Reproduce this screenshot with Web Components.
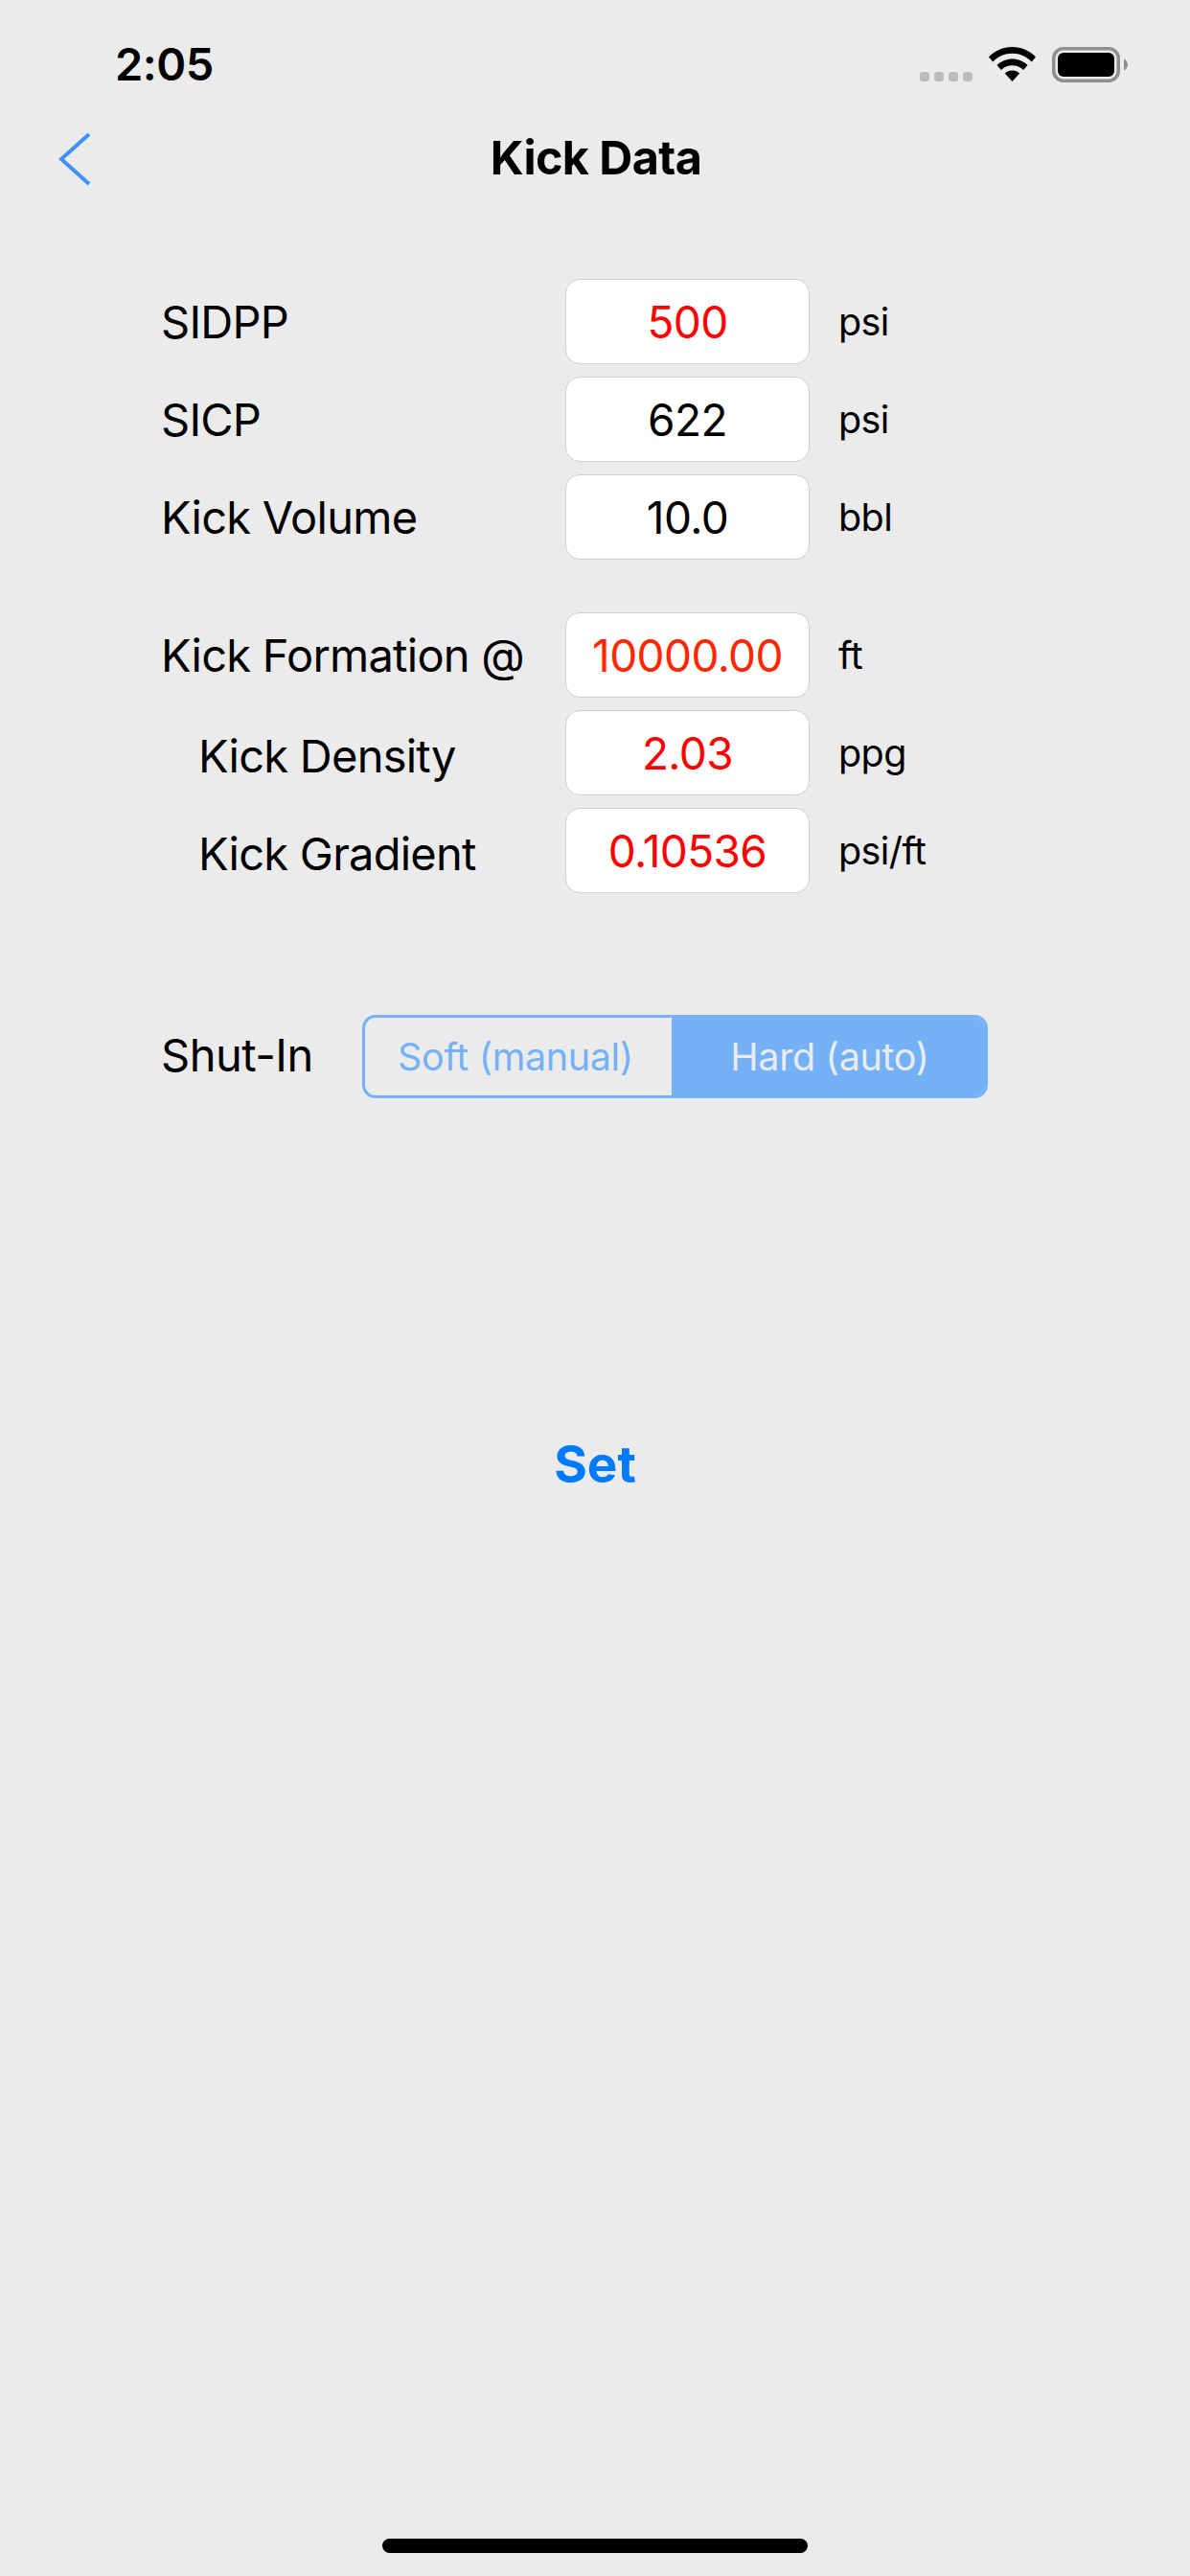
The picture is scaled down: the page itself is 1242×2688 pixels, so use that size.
<!DOCTYPE html>
<html lang="en"><head><meta charset="utf-8"><title>Kick Data</title>
<style>
html,body{margin:0;padding:0;background:#ebebeb}
body{font-family:Inter,"Liberation Sans",sans-serif;color:#000}
</style></head>
<body>
<kick-screen>
  <status-bar slot="status" time="2:05"></status-bar>
  <nav-bar slot="nav" title="Kick Data"></nav-bar>
  <form-group>
    <data-row label="SIDPP" value="500" unit="psi" color="#ff0000"></data-row>
    <data-row label="SICP" value="622" unit="psi"></data-row>
    <data-row label="Kick Volume" value="10.0" unit="bbl"></data-row>
  </form-group>
  <form-group second>
    <data-row label="Kick Formation @" value="10000.00" unit="ft" color="#ff2600"></data-row>
    <data-row label="Kick Density" value="2.03" unit="ppg" color="#ff0000" indent></data-row>
    <data-row label="Kick Gradient" value="0.10536" unit="psi/ft" color="#ff0000" indent></data-row>
  </form-group>
  <shut-in></shut-in>
  <set-button>Set</set-button>
  <home-indicator slot="home"></home-indicator>
</kick-screen>
<script>
function def(name,html,init){
  customElements.define(name,class extends HTMLElement{
    constructor(){super();this.attachShadow({mode:'open'}).innerHTML=html;}
    connectedCallback(){if(init)init(this,this.shadowRoot);}
  });
}
def('kick-screen',`<style>
:host{display:flex;flex-direction:column;width:1242px;height:2688px;background:#ebebeb;overflow:hidden}
.main{display:flex;flex-direction:column;flex:1}
</style><slot name="status"></slot><slot name="nav"></slot><div class="main"><slot></slot></div><slot name="home"></slot>`);

def('status-bar',`<style>
:host{display:flex;align-items:flex-start;justify-content:space-between;height:116px;box-sizing:border-box;padding:44px 65px 0 120px}
.t{font:600 47px/46px Inter,"Liberation Sans",sans-serif;letter-spacing:-.5px}
.r{display:flex;align-items:flex-start;padding-top:5px}
.dots{display:flex;gap:5px;margin-top:26px;margin-right:17px}
.dots i{width:10px;height:10px;border-radius:3.5px;background:#bcbcbc}
svg{display:block}
.wifi{margin-right:17px}
</style><div class="t"></div><div class="r"><div class="dots"><i></i><i></i><i></i><i></i></div>
<svg class="wifi" width="49" height="36" viewBox="0 0 49 36"><path fill="#000" d="M24.500 0C15 0 6.500 3.600 0 10.500l4.300 5C9.600 9.800 16.800 6.700 24.500 6.700s14.900 3.100 20.200 8.800l4.300-5C42.500 3.600 34 0 24.500 0z"/><path fill="#000" d="M24.500 12.500c-6.200 0-11.800 2.400-16 6.500l4.400 5c3-2.900 7.100-4.700 11.600-4.700s8.600 1.800 11.600 4.700l4.400-5c-4.200-4.100-9.800-6.500-16-6.500z"/><path fill="#000" d="M24.500 24.500c-3 0-5.700 1.100-7.700 3L24.500 36l7.700-8.500c-2-1.900-4.700-3-7.700-3z"/></svg>
<svg width="79" height="37" viewBox="0 0 79 37"><rect x="1.750" y="1.750" width="67.500" height="33.500" rx="10" fill="none" stroke="#8e8e8e" stroke-width="3.500"/><rect x="6" y="6" width="59" height="25" rx="6" fill="#000"/><path d="M75 12.500c2 .8 4 3 4 6s-2 5.200-4 6z" fill="#8e8e8e"/></svg>
</div>`,(h,s)=>{s.querySelector('.t').textContent=h.getAttribute('time')});

def('nav-bar',`<style>
:host{display:grid;grid-template-columns:1fr auto 1fr;align-items:center;height:100px;box-sizing:border-box}
.b{padding-left:61px;display:flex}
.t{font:700 48.500px/60px Inter,"Liberation Sans",sans-serif;letter-spacing:-.6px;padding:0 0 2px 2px}
svg{display:block}
</style><div class="b"><svg width="34" height="56" viewBox="0 0 34 56"><path d="M32 2 3 28l29 26" fill="none" stroke="#3d92f6" stroke-width="4"/></svg></div><div class="t"></div><div></div>`,(h,s)=>{s.querySelector('.t').textContent=h.getAttribute('title')});

def('form-group',`<style>
:host{display:flex;flex-direction:column;gap:13px;padding:75px 0 0 168px}
:host([second]){padding-top:55px}
</style><slot></slot>`);

def('data-row',`<style>
:host{display:grid;grid-template-columns:422px 255px auto;align-items:center;height:89px}
.l{font:400 47px/56px Inter,"Liberation Sans",sans-serif;letter-spacing:-.75px;white-space:nowrap}
:host([indent]) .l{padding-left:39px;padding-top:6px}
.v{box-sizing:border-box;height:89px;background:#fff;border:1.500px solid #cfcfcf;border-radius:15px;display:flex;align-items:center;justify-content:center;font:400 46px/56px Inter,"Liberation Sans",sans-serif;letter-spacing:-.6px}
.u{font:400 39.500px/50px Inter,"Liberation Sans",sans-serif;padding-left:30px;letter-spacing:-.6px}
</style><div class="l"></div><div class="v"></div><div class="u"></div>`,(h,s)=>{
  s.querySelector('.l').textContent=h.getAttribute('label');
  const v=s.querySelector('.v');v.textContent=h.getAttribute('value');
  if(h.getAttribute('color'))v.style.color=h.getAttribute('color');
  s.querySelector('.u').textContent=h.getAttribute('unit');
});

def('shut-in',`<style>
:host{display:flex;align-items:center;padding:127px 0 0 168px}
.l{width:210px;font:400 47px/56px Inter,"Liberation Sans",sans-serif;letter-spacing:-.5px;padding-bottom:3px}
.s{display:flex;width:653px;height:87px;box-sizing:border-box;border:3px solid #74b1f7;border-radius:14px;overflow:hidden;font:400 39.500px/50px Inter,"Liberation Sans",sans-serif;letter-spacing:-.35px}
.s div{display:flex;align-items:center;justify-content:center}
.a{width:320px;box-sizing:border-box;padding-right:6px;color:#74b1f7}
.b{flex:1;background:#74b1f7;color:#ebebeb;padding-left:3px}
</style><div class="l">Shut-In</div><div class="s"><div class="a">Soft (manual)</div><div class="b">Hard (auto)</div></div>`);

def('set-button',`<style>
:host{display:block;text-align:center;padding-top:352px;font:700 53px/60px Inter,"Liberation Sans",sans-serif;color:#007aff}
</style><slot></slot>`);

def('home-indicator',`<style>
:host{display:flex;justify-content:center;height:39px}
i{display:block;width:444px;height:15px;border-radius:8px;background:#000}
</style><i></i>`);
</script>
</body></html>
